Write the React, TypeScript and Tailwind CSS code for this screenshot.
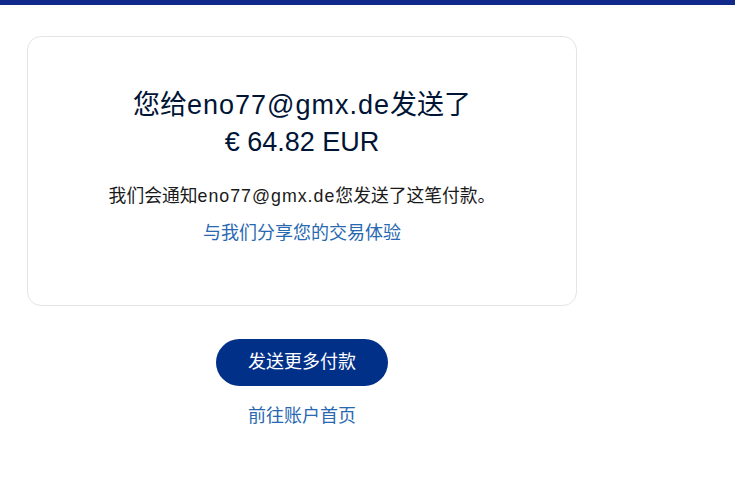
import React from "react";

export default function App() {
  const font = { fontFamily: '"Liberation Sans", "Noto Sans CJK SC", sans-serif' };
  return (
    <div className="min-h-[482px] w-[735px] bg-white" style={font}>
      <div className="h-[5px] bg-[#11298a]" />
      <div className="pl-[27px] pt-[31px] w-[577px]">
        <div className="h-[270px] rounded-[14px] border border-[#e4e4e4] flex flex-col items-center pt-[50px]">
          <h1 className="text-[27px] leading-[37px] text-[#001435] text-center font-normal">
            您给<span className="tracking-[1px]">eno77@gmx.de</span>发送了
            <br />
            € 64.82 EUR
          </h1>
          <p className="mt-[22px] text-[17.8px] leading-[26px] text-[#1a1a1a]">
            我们会通知<span className="tracking-[1px]">eno77@gmx.de</span>您发送了这笔付款。
          </p>
          <a className="mt-[11px] text-[18px] leading-[26px] text-[#2868b1]">与我们分享您的交易体验</a>
        </div>
        <div className="flex flex-col items-center mt-[33px]">
          <button className="h-[47px] w-[172px] rounded-full bg-[#003087] text-white text-[18px]">
            发送更多付款
          </button>
          <a className="mt-[17px] text-[18px] leading-[26px] text-[#2868b1]">前往账户首页</a>
        </div>
      </div>
    </div>
  );
}
